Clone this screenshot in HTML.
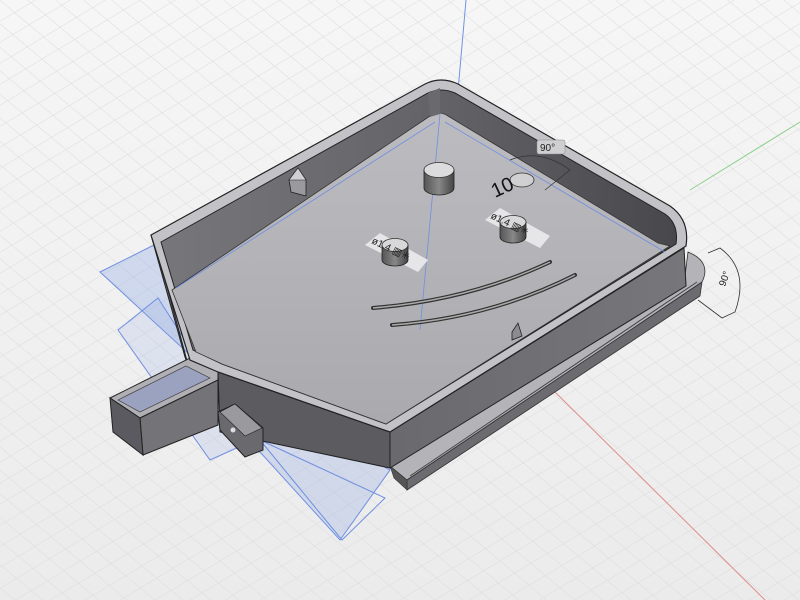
<!DOCTYPE html>
<html><head><meta charset="utf-8"><style>
html,body{margin:0;padding:0;width:800px;height:600px;overflow:hidden;background:#f2f2f2}
svg{display:block}
text{font-family:"Liberation Sans",sans-serif}
</style></head><body>
<svg width="800" height="600" viewBox="0 0 800 600" xmlns="http://www.w3.org/2000/svg">
<defs>
<linearGradient id="bg" x1="0" y1="0" x2="0" y2="1"><stop offset="0" stop-color="#f6f6f6"/><stop offset="1" stop-color="#ebebeb"/></linearGradient>
<linearGradient id="floor" x1="0" y1="0" x2="0" y2="1"><stop offset="0" stop-color="#bcbcc0"/><stop offset="1" stop-color="#aaaaae"/></linearGradient>
<linearGradient id="wallin" x1="0" y1="0" x2="1" y2="0"><stop offset="0" stop-color="#77777b"/><stop offset="0.55" stop-color="#636367"/><stop offset="1" stop-color="#48484c"/></linearGradient>
<linearGradient id="wallout" x1="0" y1="0" x2="1" y2="0"><stop offset="0" stop-color="#6a6a6e"/><stop offset="1" stop-color="#77777b"/></linearGradient>
<pattern id="g1" width="800" height="18" patternUnits="userSpaceOnUse" patternTransform="rotate(-31)"><line x1="0" y1="0" x2="800" y2="0" stroke="#dcdcdc" stroke-width="1"/></pattern>
<pattern id="g2" width="800" height="18" patternUnits="userSpaceOnUse" patternTransform="rotate(40)"><line x1="0" y1="0" x2="800" y2="0" stroke="#dcdcdc" stroke-width="1"/></pattern>
<linearGradient id="cyl" x1="0" y1="0" x2="1" y2="0"><stop offset="0" stop-color="#555"/><stop offset="0.5" stop-color="#888"/><stop offset="1" stop-color="#444"/></linearGradient>
</defs>
<rect width="800" height="600" fill="url(#bg)"/>
<rect width="800" height="600" fill="url(#g1)"/>
<rect width="800" height="600" fill="url(#g2)"/>
<line x1="555" y1="392" x2="765" y2="600" stroke="#e08a8a" stroke-width="1"/>
<line x1="690" y1="190" x2="800" y2="122" stroke="#8ccf8c" stroke-width="1"/>
<line x1="466" y1="0" x2="437" y2="330" stroke="#6f93e6" stroke-width="1"/>
<polygon points="100,272 160,242 230,370 215,378" fill="#8fa8e6" fill-opacity="0.35" stroke="#6f8fe0"/>
<polygon points="118,330 158,298 250,442 210,460" fill="#8fa8e6" fill-opacity="0.2" stroke="#6f8fe0"/>
<polygon points="218,378 390,470 340,540 240,430" fill="#8fa8e6" fill-opacity="0.3" stroke="#6f8fe0"/>
<polygon points="260,440 385,498 342,540" fill="none" stroke="#6f8fe0"/>
<!-- lip -->
<path d="M390,466 L684,284 L688,252 Q712,262 702,282 L407,480 Z" fill="#b4b4b8" stroke="#333" stroke-width="0.8"/>
<polygon points="407,480 702,282 700,296 407,490" fill="#6b6b70" stroke="#333" stroke-width="0.8"/>
<polygon points="390,466 407,480 407,490 394,478" fill="#555" stroke="#333" stroke-width="0.6"/>
<line x1="410" y1="476" x2="697" y2="282" stroke="#444" stroke-width="1"/>
<!-- outer faces -->
<polygon points="390,432 684,248 686,286 390,468" fill="url(#wallout)" stroke="#222" stroke-width="1"/>
<polygon points="218,372 390,432 390,468 220,432" fill="#5b5b60" stroke="#222" stroke-width="1"/>
<polygon points="151,235 185,357 190,372 160,260" fill="#6a6a6e" stroke="#222" stroke-width="1"/>
<polygon points="110,398 190,358 218,372 218,380 140,418" fill="#b0b0b4" stroke="#222" stroke-width="1"/>
<polygon points="118,400 186,366 210,378 140,412" fill="#9aa2c0" stroke="#333" stroke-width="0.6"/>
<polygon points="140,418 218,380 218,425 143,455" fill="#747478" stroke="#222" stroke-width="1"/>
<polygon points="110,398 140,418 143,455 113,432" fill="#5a5a60" stroke="#222" stroke-width="1"/>
<polygon points="218,412 235,404 263,428 263,450 245,457 220,430" fill="#6a6a6e" stroke="#222"/>
<polygon points="220,412 235,404 262,428 245,436" fill="#9a9a9e" stroke="#222" stroke-width="0.6"/>
<circle cx="233" cy="430" r="2.5" fill="#ddd"/>
<!-- top rim -->
<path d="M151,235 L425,84 Q441,76 458,84 L670,206 Q690,220 686,246 L390,432 L218,372 L190,360 Z" fill="#c3c3c7" stroke="#222" stroke-width="1.2"/>
<path d="M161,242 L428,93 Q441,87 455,93 L665,214 Q679,224 676,244 L386,424 L222,364 L193,350 Z" fill="url(#wallin)" stroke="#222" stroke-width="1"/>
<path d="M172,290 L430,116 Q439,110 448,116 L658,243 L670,246 L386,424 L222,364 L196,352 Z" fill="url(#floor)" stroke="#333" stroke-width="0.8"/>
<polygon points="428,93 440,88 440,114 430,117" fill="#6a6a6e"/>
<line x1="176" y1="288" x2="435" y2="122" stroke="#6f8fe0" stroke-width="0.8"/>
<line x1="445" y1="122" x2="665" y2="252" stroke="#6f8fe0" stroke-width="0.8"/>
<line x1="440" y1="114" x2="420" y2="330" stroke="#6f8fe0" stroke-width="0.8"/>
<polygon points="289,180 298,168 306,180 306,196 291,192" fill="#9a9a9e" stroke="#222" stroke-width="0.8"/>
<polygon points="289,180 298,168 306,180" fill="#d0d0d4" stroke="#222" stroke-width="0.6"/>
<polygon points="512,332 518,323 522,336 512,340" fill="#8c8c90" stroke="#222" stroke-width="0.8"/>
<path d="M424,170 L424,188 A15,7 0 0 0 454,188 L454,170 Z" fill="url(#cyl)" stroke="#222" stroke-width="0.8"/>
<ellipse cx="439" cy="170" rx="15" ry="7.5" fill="#dcdcdf" stroke="#333" stroke-width="0.8"/>
<g>
<polygon points="365,245 380,233 428,260 418,272" fill="#e6e6e8"/>
<path d="M382,245 L382,260 A13,6 0 0 0 408,260 L408,245 Z" fill="url(#cyl)" stroke="#222" stroke-width="0.8"/>
<ellipse cx="395" cy="245" rx="13" ry="6.5" fill="#d8d8db" stroke="#333" stroke-width="0.8"/>
<text x="371" y="243" font-size="10" fill="#222" transform="rotate(25 371 243)">ø1.4 ▥✳</text>
</g>
<g>
<polygon points="485,220 500,208 550,236 540,248" fill="#e6e6e8"/>
<path d="M500,222 L500,237 A13,6 0 0 0 526,237 L526,222 Z" fill="url(#cyl)" stroke="#222" stroke-width="0.8"/>
<ellipse cx="513" cy="222" rx="13" ry="6.5" fill="#d8d8db" stroke="#333" stroke-width="0.8"/>
<text x="490" y="218" font-size="10" fill="#222" transform="rotate(25 490 218)">ø1.4 ▥✳</text>
</g>
<ellipse cx="522" cy="180" rx="12" ry="7" fill="#d0d0d3" stroke="#333" stroke-width="0.8"/>
<text x="495" y="198" font-size="20" fill="#111" transform="rotate(-25 495 198)">10</text>
<path d="M510,160 Q540,148 570,170 L545,190" fill="none" stroke="#333" stroke-width="0.7"/>
<rect x="537" y="140" width="28" height="14" rx="2" fill="#cfcfd2" stroke="#888" stroke-width="0.5"/>
<text x="540" y="151" font-size="10" fill="#222">90°</text>
<path d="M373,308 Q470,300 550,262" fill="none" stroke="#333" stroke-width="4" stroke-linecap="round"/>
<path d="M373,308 Q470,300 550,262" fill="none" stroke="#aaa" stroke-width="1.5"/>
<path d="M392,325 Q490,318 575,275" fill="none" stroke="#333" stroke-width="4" stroke-linecap="round"/>
<path d="M392,325 Q490,318 575,275" fill="none" stroke="#aaa" stroke-width="1.5"/>
<path d="M708,253 L720,248 Q750,270 735,312 L722,318 L698,300" fill="none" stroke="#333" stroke-width="0.8"/>
<text x="725" y="287" font-size="10" fill="#222" transform="rotate(-70 725 287)">90°</text>
</svg>
</body></html>
